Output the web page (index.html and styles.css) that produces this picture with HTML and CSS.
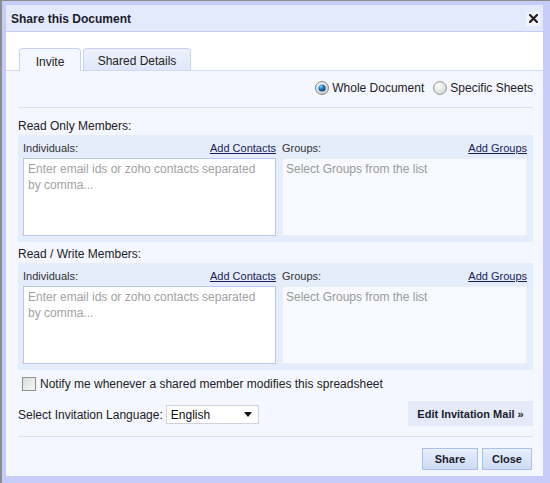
FILE: index.html
```html
<!DOCTYPE html>
<html>
<head>
<meta charset="utf-8">
<link rel="stylesheet" href="styles.css">
</head>
<body>
<div class="screen">
  <div class="window">
    <div class="titlebar">
      <span class="title">Share this Document</span>
      <span class="close-x"><svg width="9" height="9" viewBox="0 0 9 9"><path d="M1 1 L8 8 M8 1 L1 8" stroke="#222" stroke-width="2.2" stroke-linecap="square"/></svg></span>
    </div>
    <div class="tabbar">
      <div class="tab active">Invite</div>
      <div class="tab">Shared Details</div>
    </div>
    <div class="panel">
      <div class="scope">
        <label class="radio">
          <svg width="14" height="14" viewBox="0 0 14 14"><defs><radialGradient id="rg1" cx="0.4" cy="0.35" r="0.7"><stop offset="0" stop-color="#ffffff"/><stop offset="1" stop-color="#c8c8c8"/></radialGradient><radialGradient id="dot" cx="0.35" cy="0.3" r="0.75"><stop offset="0" stop-color="#8fd0f5"/><stop offset="0.5" stop-color="#1a79b8"/><stop offset="1" stop-color="#0b3e66"/></radialGradient></defs><circle cx="7" cy="7" r="6.5" fill="url(#rg1)" stroke="#8a8a8a"/><circle cx="7" cy="7" r="3.6" fill="url(#dot)"/></svg>
          <span>Whole Document</span>
        </label>
        <label class="radio">
          <svg width="14" height="14" viewBox="0 0 14 14"><defs><radialGradient id="rg2" cx="0.4" cy="0.35" r="0.75"><stop offset="0" stop-color="#ffffff"/><stop offset="1" stop-color="#cfcfcf"/></radialGradient></defs><circle cx="7" cy="7" r="6.5" fill="url(#rg2)" stroke="#9a9a9a"/></svg>
          <span>Specific Sheets</span>
        </label>
      </div>
      <div class="sep"></div>

      <div class="heading first">Read Only Members:</div>
      <div class="members">
        <div class="col left">
          <div class="col-head"><span>Individuals:</span><a class="link">Add Contacts</a></div>
          <textarea class="emails" placeholder="Enter email ids or zoho contacts separated by comma..."></textarea>
        </div>
        <div class="col right">
          <div class="col-head"><span>Groups:</span><a class="link">Add Groups</a></div>
          <div class="groups">Select Groups from the list</div>
        </div>
      </div>

      <div class="heading">Read / Write Members:</div>
      <div class="members">
        <div class="col left">
          <div class="col-head"><span>Individuals:</span><a class="link">Add Contacts</a></div>
          <textarea class="emails" placeholder="Enter email ids or zoho contacts separated by comma..."></textarea>
        </div>
        <div class="col right">
          <div class="col-head"><span>Groups:</span><a class="link">Add Groups</a></div>
          <div class="groups">Select Groups from the list</div>
        </div>
      </div>

      <div class="notify">
        <span class="checkbox"></span>
        <span>Notify me whenever a shared member modifies this spreadsheet</span>
      </div>

      <div class="lang-row">
        <div class="lang">
          <span>Select Invitation Language:</span>
          <div class="select"><span>English</span><span class="caret"></span></div>
        </div>
        <div class="edit-mail">Edit Invitation Mail &raquo;</div>
      </div>

      <div class="sep bottom"></div>

      <div class="actions">
        <div class="btn share">Share</div>
        <div class="btn">Close</div>
      </div>
    </div>
  </div>
</div>
</body>
</html>
```
FILE: styles.css
```css
html, body {
  margin: 0;
  padding: 0;
  background: #c4ccf7;
}

.screen {
  width: 550px;
  height: 483px;
  box-sizing: border-box;
  border-top: 1px solid #8c8c8c;
  border-left: 2px solid #8c8c8c;
  background: #c4ccf7;
  padding: 4px 7px 7px 4px;
  font-family: "Liberation Sans", Arial, sans-serif;
  font-size: 12px;
  color: #222;
}

.window {
  height: 100%;
  display: flex;
  flex-direction: column;
  background: #f4f7ff;
}

.titlebar {
  height: 26px;
  flex: none;
  background: #e3eafc;
  border-bottom: 1px solid #c4ccf7;
  display: flex;
  align-items: center;
  justify-content: space-between;
  padding: 0 3px 0 5px;
}

.title {
  font-weight: bold;
  font-size: 12px;
  color: #1c1c2c;
  margin-top: 1px;
}

.close-x {
  width: 14px;
  height: 14px;
  background: #f1f4fd;
  display: flex;
  align-items: center;
  justify-content: center;
  margin-top: 1px;
}

.close-x svg {
  display: block;
}

.tabbar {
  height: 38px;
  flex: none;
  background: #ffffff;
  display: flex;
  align-items: flex-end;
  gap: 2px;
  padding-left: 13px;
  border-bottom: 1px solid #d2daf5;
}

.tab {
  height: 22px;
  box-sizing: border-box;
  border: 1px solid #c8d2f2;
  border-bottom: none;
  border-radius: 4px 4px 0 0;
  background: linear-gradient(#eef2fd, #dfe7fa);
  display: flex;
  align-items: center;
  justify-content: center;
  padding-top: 3px;
  font-size: 12px;
  color: #222;
  width: 108px;
}

.tab.active {
  width: 62px;
  background: #f4f7ff;
  height: 23px;
  margin-bottom: -1px;
}

.panel {
  flex: 1;
  padding: 0 10px 0 12px;
  background: #f4f7ff;
}

.scope {
  margin-top: 8px;
  height: 18px;
  display: flex;
  justify-content: flex-end;
  align-items: center;
  gap: 9px;
}

.radio {
  display: flex;
  align-items: center;
  gap: 3px;
  font-size: 12px;
  color: #222;
}

.radio svg {
  display: block;
}

.sep {
  margin-top: 10px;
  height: 1px;
  background: #d9e1f3;
}

.heading {
  margin-top: 5px;
  line-height: 14px;
  height: 14px;
  margin-bottom: 2px;
  font-size: 12px;
  color: #222;
}

.heading.first {
  margin-top: 11px;
}

.members {
  height: 107px;
  box-sizing: border-box;
  background: #e5edfb;
  padding: 6px 6px 6px 5px;
  display: flex;
  gap: 6px;
}

.col {
  display: flex;
  flex-direction: column;
}

.col.left {
  width: 253px;
}

.col.right {
  width: 245px;
}

.col-head {
  height: 14px;
  line-height: 14px;
  margin-bottom: 3px;
  display: flex;
  justify-content: space-between;
  font-size: 11px;
  color: #333;
}

.link {
  color: #1a1d5a;
  text-decoration: underline;
  cursor: pointer;
}

.emails {
  margin: 0;
  height: 78px;
  box-sizing: border-box;
  border: 1px solid #b9c5ec;
  background: #ffffff;
  resize: none;
  padding: 2px 4px;
  font-family: "Liberation Sans", Arial, sans-serif;
  font-size: 12px;
  line-height: 16px;
  color: #222;
  outline: none;
}

.emails::placeholder {
  color: #a2a2a2;
  opacity: 1;
}

.groups {
  height: 78px;
  box-sizing: border-box;
  border: 1px solid #e9eff9;
  background: #f7f9ff;
  padding: 2px 3px;
  font-size: 12px;
  line-height: 16px;
  color: #9a9a9a;
}

.notify {
  margin-top: 6px;
  height: 15px;
  display: flex;
  align-items: center;
  gap: 4px;
  padding-left: 4px;
  font-size: 12px;
  color: #222;
}

.checkbox {
  width: 14px;
  height: 14px;
  box-sizing: border-box;
  border: 1px solid #8f8f8f;
  background: linear-gradient(135deg, #dcdcdc, #f7f7f7);
}

.lang-row {
  margin-top: 10px;
  height: 25px;
  display: flex;
  justify-content: space-between;
  align-items: center;
}

.lang {
  display: flex;
  align-items: center;
  gap: 3px;
  margin-top: 2px;
}

.select {
  width: 93px;
  height: 19px;
  box-sizing: border-box;
  border: 1px solid #cfd3dc;
  background: #ffffff;
  display: flex;
  align-items: center;
  justify-content: space-between;
  padding: 0 6px 0 4px;
  font-size: 12px;
  color: #111;
}

.caret {
  width: 0;
  height: 0;
  border-left: 4px solid transparent;
  border-right: 4px solid transparent;
  border-top: 5px solid #111;
}

.edit-mail {
  width: 125px;
  height: 25px;
  box-sizing: border-box;
  background: #e4eaf8;
  display: flex;
  align-items: center;
  justify-content: center;
  font-size: 11px;
  font-weight: bold;
  color: #1c1c2c;
}

.sep.bottom {
  margin-top: 10px;
}

.actions {
  margin-top: 11px;
  display: flex;
  justify-content: flex-end;
  gap: 4px;
  padding-right: 1px;
}

.btn {
  width: 50px;
  height: 22px;
  box-sizing: border-box;
  border: 1px solid #a9c1e8;
  background: linear-gradient(#e8effc, #cddbf4);
  display: flex;
  align-items: center;
  justify-content: center;
  font-size: 11px;
  font-weight: bold;
  color: #1c1c2c;
}

.btn.share {
  width: 56px;
}
```
